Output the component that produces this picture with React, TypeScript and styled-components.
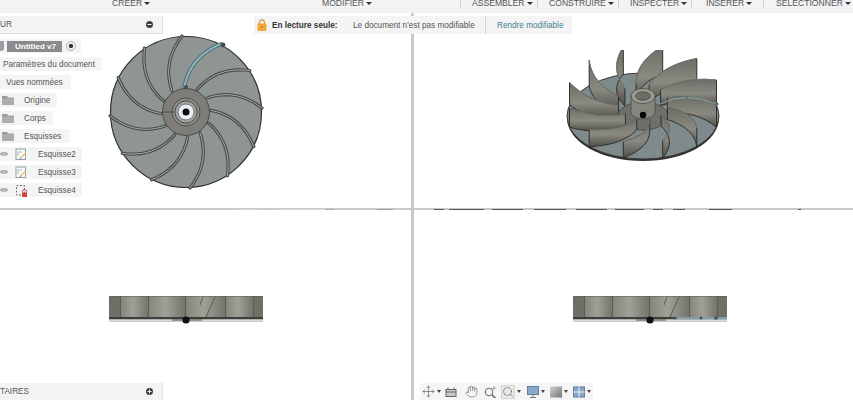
import React from 'react';
import styled, { createGlobalStyle } from 'styled-components';
import { Hand, Move, Search } from 'lucide-react';

const tools = [
  { label: 'CREER', width: 229, left: 112, line: false },
  { label: 'MODIFIER', width: 232, left: 93, line: true },
  { label: 'ASSEMBLER', width: 77, left: 11, line: true },
  { label: 'CONSTRUIRE', width: 81, left: 11, line: true },
  { label: 'INSPECTER', width: 73, left: 11, line: true },
  { label: 'INSERER', width: 72, left: 14, line: true },
  { label: 'SELECTIONNER', width: 89, left: 12, line: false },
];

const folders = ['Origine', 'Corps', 'Esquisses'];
const sketches = [
  { label: 'Esquisse2', locked: false },
  { label: 'Esquisse3', locked: false },
  { label: 'Esquisse4', locked: true },
];

// bits of the side views that show through the pane divider
const marks = [
  { left: 234, width: 26, color: '#dcd6c8' },
  { left: 274, width: 51, color: '#dcd6c8' },
  { left: 325, width: 9, color: '#aaaaaa' },
  { left: 377, width: 16, color: '#a0a0a0' },
  { left: 434, width: 10, color: '#555555' },
  { left: 449, width: 35, color: '#555555' },
  { left: 492, width: 31, color: '#555555' },
  { left: 534, width: 32, color: '#555555' },
  { left: 576, width: 31, color: '#555555' },
  { left: 615, width: 29, color: '#555555' },
  { left: 653, width: 10, color: '#555555' },
  { left: 673, width: 12, color: '#555555' },
  { left: 709, width: 23, color: '#555555' },
  { left: 798, width: 3, color: '#555555' },
];

const blade = (turn: number, cx: number, cy: number, squash: number) => {
  const a = (turn * Math.PI) / 180;
  const base: [number, number][] = [];
  for (let i = 0; i <= 12; i++) {
    const t = i / 12;
    const x = (1 - t) * (1 - t) * 21 + 2 * t * (1 - t) * 50 + t * t * 76;
    const y = (1 - t) * (1 - t) * -14 + 2 * t * (1 - t) * -24 + t * t * -4;
    base.push([
      cx + x * Math.cos(a) - y * Math.sin(a),
      cy + (x * Math.sin(a) + y * Math.cos(a)) * squash,
    ]);
  }
  const depth = base.reduce((sum, p) => sum + p[1], 0) / base.length;
  const lift = 22 - (depth - cy) * 0.2;
  const line = base.map((p) => `${p[0].toFixed(1)} ${p[1].toFixed(1)}`).join(' L');
  const top = base
    .map((p, i) => `${p[0].toFixed(1)} ${(p[1] - lift * (0.65 + (0.35 * i) / 12)).toFixed(1)}`)
    .reverse()
    .join(' L');
  return {
    curve: `M${line}`,
    wall: `M${line} L${top} Z`,
    edge: `M${top}`,
    depth,
  };
};

const turns = Array.from({ length: 12 }, (_, i) => i * 30);

const TopFan = () => (
  <svg width="156" height="156" viewBox="0 0 156 156">
    <circle cx="78" cy="78" r="75.5" fill="#8f9593" stroke="#2d2f2f" strokeWidth="1.2" />
    {turns.map((turn) => {
      const b = blade(turn, 78, 78, 1);
      const picked = turn === 300;
      return (
        <g key={turn} fill="none" strokeLinecap="round">
          <path d={b.curve} stroke={picked ? '#4f6f76' : '#474a4a'} strokeWidth={picked ? 4 : 3.2} />
          <path d={b.curve} stroke={picked ? '#8fb4bb' : '#a8adab'} strokeWidth={picked ? 2 : 1} />
        </g>
      );
    })}
    <circle cx="78" cy="78" r="23.5" fill="#7f7d78" stroke="#4a4a48" />
    <circle cx="78" cy="78" r="14" fill="#8d8c86" stroke="#55554f" />
    <circle cx="78" cy="78" r="11" fill="#a5a49d" stroke="#4f4f4a" />
    <circle cx="78" cy="78" r="8" fill="#e9f3f6" stroke="#6d7a80" />
    <circle cx="78" cy="78" r="3.5" fill="#0c0c0c" />
    <circle cx="115" cy="11" r="2.4" fill="#454a4a" />
    <circle cx="78" cy="53" r="2" fill="#454a4a" />
    <line x1="54" y1="78" x2="66" y2="78" stroke="#3d3d3b" strokeWidth="0.8" />
  </svg>
);

const IsoFan = () => {
  const walls = turns
    .map((turn) => ({ turn, ...blade(turn + 18, 83, 66, 0.57) }))
    .sort((a, b) => a.depth - b.depth);
  const back = walls.filter((w) => w.depth < 66);
  const front = walls.filter((w) => w.depth >= 66);
  const wall = (w: (typeof walls)[number]) => (
    <g key={w.turn} strokeLinejoin="round">
      <path d={w.wall} fill="url(#isoWall)" stroke="#2f302b" strokeWidth="1" />
      <path d={w.edge} fill="none" stroke="#a3a39b" strokeWidth="0.6" />
    </g>
  );
  return (
    <svg width="165" height="115" viewBox="0 0 165 115">
      <defs>
        <linearGradient id="isoWall" x1="0" y1="0" x2="0" y2="1">
          <stop offset="0" stopColor="#6d6d67" />
          <stop offset="0.55" stopColor="#8a8a82" />
          <stop offset="1" stopColor="#4f4f49" />
        </linearGradient>
      </defs>
      <ellipse cx="83" cy="68" rx="76" ry="43" fill="#2f302e" />
      <ellipse cx="83" cy="66" rx="76" ry="43" fill="#7f8a8c" stroke="#3a3b38" />
      {back.map(wall)}
      <ellipse cx="83" cy="66" rx="25" ry="14" fill="#6f6f69" stroke="#41423d" strokeWidth="0.8" />
      <path d="M71 46 L71 62 A12 7 0 0 0 95 62 L95 46 Z" fill="#85857d" stroke="#4b4b45" strokeWidth="0.8" />
      <ellipse cx="83" cy="46" rx="12" ry="7.5" fill="#9a9a92" stroke="#4b4b45" strokeWidth="0.8" />
      <ellipse cx="83" cy="46" rx="7.5" ry="4.2" fill="#6d6d66" stroke="#4b4b45" strokeWidth="0.8" />
      <circle cx="83" cy="65" r="3.2" fill="#050505" />
      {front.map(wall)}
      <path d="M100 54 Q125 41 157 54" fill="none" stroke="#8fb0b8" strokeWidth="0.9" />
      <circle cx="127" cy="47" r="1.3" fill="#55707a" />
      <circle cx="157" cy="54" r="1.6" fill="#5a6a6e" />
    </svg>
  );
};

const panels = [
  { x: 0, width: 11, dark: true },
  { x: 12, width: 27, dark: false },
  { x: 40, width: 36, dark: false },
  { x: 77, width: 39, dark: false },
  { x: 117, width: 27, dark: false },
  { x: 145, width: 9, dark: true },
];

const SideFan = ({ picked }: { picked?: boolean }) => (
  <svg width="154" height="30" viewBox="0 0 154 30">
    <defs>
      <linearGradient id="sidePanel" x1="0" y1="0" x2="1" y2="0">
        <stop offset="0" stopColor="#85857c" />
        <stop offset="0.45" stopColor="#a0a097" />
        <stop offset="1" stopColor="#74746c" />
      </linearGradient>
    </defs>
    <rect x="0" y="1" width="154" height="22" fill="#5c5c55" />
    {panels.map((panel) => (
      <rect
        key={panel.x}
        x={panel.x}
        y="1.5"
        width={panel.width}
        height="20.5"
        fill={panel.dark ? '#6f6f68' : 'url(#sidePanel)'}
      />
    ))}
    <path d="M94 2 L91 10 M106 2 L97 22" stroke="#4c4c46" strokeWidth="0.8" fill="none" />
    <rect x="0" y="22" width="154" height="2.4" fill="#3e3e3a" />
    <rect x="0" y="25.5" width="154" height="1.2" fill="#b4b4ae" />
    <rect x="63" y="24.5" width="30" height="1" fill="#55554f" />
    <circle cx="77" cy="25" r="3.6" fill="#111" />
    {picked && (
      <g>
        <rect x="101" y="22" width="53" height="2" fill="#7f9eaa" />
        <circle cx="102" cy="23" r="1.6" fill="#47555a" />
        <circle cx="128" cy="23" r="1.4" fill="#47555a" />
        <circle cx="143" cy="23" r="1.8" fill="#47555a" />
      </g>
    )}
  </svg>
);

const LockIcon = () => (
  <svg width="10" height="12" viewBox="0 0 10 12">
    <path d="M2.5 5V3.4a2.5 2.5 0 0 1 5 0V5" fill="none" stroke="#d9952f" strokeWidth="1.2" />
    <rect x="0.5" y="4.5" width="9" height="7.5" rx="1" fill="#f2a93b" />
    <rect x="4.4" y="7" width="1.2" height="2.4" fill="#c47f1c" />
  </svg>
);

const FolderIcon = () => (
  <svg width="12" height="9" viewBox="0 0 12 9">
    <path d="M0 0H5L6 1.5H12V9H0Z" fill="#9b9b9b" />
    <rect x="0" y="2.5" width="12" height="6.5" fill="#adadad" />
  </svg>
);

const EyeIcon = () => (
  <svg width="11" height="8" viewBox="0 0 11 8">
    <path d="M0 4C2 .4 9 .4 11 4C9 7.6 2 7.6 0 4Z" fill="#9a9a9a" />
    <circle cx="5.5" cy="4" r="2.2" fill="#f0f0f0" />
    <circle cx="5.5" cy="4" r="1.2" fill="#808080" />
  </svg>
);

const SketchIcon = ({ locked }: { locked: boolean }) => (
  <svg width="13" height="13" viewBox="0 0 13 13">
    {locked ? (
      <g>
        <rect x="1.5" y="1.5" width="8" height="9.5" fill="none" stroke="#777" strokeDasharray="2 1.5" />
        <path d="M7.5 8.5V7.5a2 2 0 0 1 4 0v1" fill="none" stroke="#c8433f" />
        <rect x="7" y="8.5" width="5" height="4.5" fill="#d6423c" />
      </g>
    ) : (
      <g>
        <rect x="1" y="1" width="9.5" height="10.5" fill="#f7fafb" stroke="#8aa2ad" />
        <path d="M3 4H7M3 4V8" stroke="#b5b5b5" fill="none" />
        <path d="M6 9.5L11 4.5" stroke="#eec25a" strokeWidth="1.5" />
        <path d="M5 11L6 9.5" stroke="#d8776d" strokeWidth="1.2" />
      </g>
    )}
  </svg>
);

const RoundButton = ({ plus }: { plus?: boolean }) => (
  <svg width="7" height="7" viewBox="0 0 7 7">
    <circle cx="3.5" cy="3.5" r="3.5" fill="#3e3e3e" />
    <rect x="1.5" y="3" width="4" height="1" fill="#f3f3f3" />
    {plus && <rect x="3" y="1.5" width="1" height="4" fill="#f3f3f3" />}
  </svg>
);

const Home = () => (
  <Page>
    <GlobalStyle />
    <Toolbar>
      {tools.map((tool) => (
        <Tool key={tool.label} $width={tool.width} $left={tool.left} $line={tool.line}>
          {tool.label}
          <Caret />
        </Tool>
      ))}
    </Toolbar>

    <Stage>
      <Viewport $top={21} $left={108}>
        <TopFan />
      </Viewport>
      <Viewport $top={37} $left={146}>
        <IsoFan />
      </Viewport>
      <Viewport $top={85} $left={109}>
        <SideFan />
      </Viewport>
      <Viewport $top={85} $left={159}>
        <SideFan picked />
      </Viewport>

      {marks.map((mark) => (
        <Mark key={mark.left} $left={mark.left} $width={mark.width} $color={mark.color} />
      ))}

      <Browser>
        <PanelHeader>
          UR
          <RoundButton />
        </PanelHeader>
        <Tree>
          <Row $width={81}>
            <Shield />
            <DocName>Untitled v7</DocName>
            <Radio />
          </Row>
          <Row $width={101} $indent={3}>Paramètres du document</Row>
          <Row $width={71} $indent={6}>Vues nommées</Row>
          {folders.map((name) => (
            <Row key={name} $width={name === 'Corps' ? 53 : name === 'Origine' ? 57 : 69} $indent={2} $gap={10}>
              <FolderIcon />
              {name}
            </Row>
          ))}
          {sketches.map((sketch) => (
            <Row key={sketch.label} $width={82} $gap={7}>
              <EyeSlot>
                <EyeIcon />
              </EyeSlot>
              <SketchIcon locked={sketch.locked} />
              <SketchName>{sketch.label}</SketchName>
            </Row>
          ))}
        </Tree>
      </Browser>

      <Banner>
        <LockIcon />
        <BannerTitle>En lecture seule:</BannerTitle>
        <BannerText>Le document n'est pas modifiable</BannerText>
        <BannerLink>Rendre modifiable</BannerLink>
      </Banner>

      <Comments>
        TAIRES
        <RoundButton plus />
      </Comments>

      <NavBar>
        <Move size={13} strokeWidth={1.3} />
        <NavCaret $gap={2} />
        <NavSlot $gap={4}>
          <svg width="12" height="12" viewBox="0 0 12 12">
            <rect x="1" y="3.5" width="10" height="7" fill="#c9c9c9" stroke="#666" />
            <path d="M3 3.5V1.5M9 3.5V1.5M1 6H11" stroke="#666" fill="none" />
          </svg>
        </NavSlot>
        <NavSlot $gap={8}>
          <Hand size={13} strokeWidth={1.2} />
        </NavSlot>
        <NavSlot $gap={6}>
          <svg width="12" height="12" viewBox="0 0 12 12">
            <circle cx="5" cy="6" r="3.8" fill="none" stroke="#666" />
            <path d="M8 9L11.5 12" stroke="#555" strokeWidth="1.4" />
            <path d="M10 0.5V4M8.3 2.2H11.7" stroke="#888" strokeWidth="0.8" />
          </svg>
        </NavSlot>
        <NavBox $gap={6}>
          <Search size={12} strokeWidth={1.3} />
        </NavBox>
        <NavCaret $gap={3} />
        <NavSlot $gap={6}>
          <svg width="12" height="12" viewBox="0 0 12 12">
            <rect x="0.5" y="0.5" width="11" height="8" fill="#8ba7c9" stroke="#5f7f9f" />
            <path d="M6 9V11M3 11.5H9" stroke="#777" fill="none" />
          </svg>
        </NavSlot>
        <NavCaret $gap={2} />
        <NavSlot $gap={5}>
          <svg width="12" height="12" viewBox="0 0 12 12">
            <defs>
              <linearGradient id="navShade" x1="0" y1="0" x2="1" y2="1">
                <stop offset="0" stopColor="#d0d0d0" />
                <stop offset="1" stopColor="#777" />
              </linearGradient>
            </defs>
            <rect x="0" y="0.5" width="12" height="11" fill="url(#navShade)" />
          </svg>
        </NavSlot>
        <NavCaret $gap={2} />
        <NavSlot $gap={5}>
          <svg width="12" height="12" viewBox="0 0 12 12">
            <rect x="0.5" y="1" width="11" height="10" fill="#8aa5c8" stroke="#5b7ca3" />
            <path d="M6 1V11M0.5 6H11.5" stroke="#eef3f8" />
          </svg>
        </NavSlot>
        <NavCaret $gap={2} />
      </NavBar>
    </Stage>
  </Page>
);

const GlobalStyle = createGlobalStyle`
  html, body {
    margin: 0;
    background: #fff;
    overflow: hidden;
  }
`;

const Page = styled.div`
  width: 853px;
  height: 400px;
  display: flex;
  flex-direction: column;
  overflow: hidden;
  font-family: 'Liberation Sans', Arial, sans-serif;
  color: #555;
`;

const Toolbar = styled.div`
  height: 13px;
  flex: none;
  display: flex;
  background: #f3f3f3;
  overflow: hidden;
`;

const Tool = styled.div<{ $width: number; $left: number; $line: boolean }>`
  width: ${(p) => p.$width}px;
  height: 8px;
  box-sizing: border-box;
  flex: none;
  display: flex;
  align-items: center;
  padding: 0 0 2px ${(p) => p.$left}px;
  font-size: 8.6px;
  line-height: 6px;
  white-space: nowrap;
  border-right: ${(p) => (p.$line ? '1px solid #cfcfcf' : '0')};
`;

const Caret = styled.span`
  margin-left: 2px;
  border-left: 3px solid transparent;
  border-right: 3px solid transparent;
  border-top: 3.5px solid #333;
`;

const Stage = styled.div`
  position: relative;
  flex: 1;
  display: grid;
  grid-template-columns: 411px 1fr;
  grid-template-rows: 195px 1fr;
  gap: 2px 3px;
  background: #c9c9c9;
`;

const Viewport = styled.div<{ $top: number; $left: number }>`
  background: #fff;
  padding: ${(p) => p.$top}px 0 0 ${(p) => p.$left}px;
  overflow: hidden;

  svg {
    display: block;
  }
`;

const Mark = styled.span<{ $left: number; $width: number; $color: string }>`
  position: absolute;
  left: ${(p) => p.$left}px;
  top: 196px;
  width: ${(p) => p.$width}px;
  height: 1px;
  background: ${(p) => p.$color};
`;

const Browser = styled.div`
  position: absolute;
  left: 0;
  top: 3px;
  width: 163px;
`;

const PanelHeader = styled.div`
  height: 18px;
  display: flex;
  align-items: center;
  justify-content: space-between;
  padding-right: 9px;
  box-sizing: border-box;
  background: #f3f3f3;
  border-right: 1px solid #ddd;
  border-bottom: 1px solid #ddd;
  font-size: 8.2px;
`;

const Tree = styled.div`
  margin-top: 5px;
  display: flex;
  flex-direction: column;
  gap: 4px;
`;

const Row = styled.div<{ $width: number; $indent?: number; $gap?: number }>`
  width: ${(p) => p.$width}px;
  height: 14px;
  box-sizing: border-box;
  padding-left: ${(p) => p.$indent ?? 0}px;
  display: flex;
  align-items: center;
  gap: ${(p) => p.$gap ?? 0}px;
  background: #f4f4f4;
  font-size: 8.2px;
  white-space: nowrap;
`;

const Shield = styled.span`
  width: 4px;
  height: 10px;
  margin-right: 3px;
  background: #9a9ea3;
  border-radius: 0 0 3px 0;
`;

const DocName = styled.span`
  width: 55px;
  height: 11px;
  box-sizing: border-box;
  padding-left: 8px;
  background: #8b8b8b;
  color: #fff;
  font-size: 8px;
  font-weight: 700;
  line-height: 11px;
`;

const Radio = styled.span`
  width: 10px;
  height: 10px;
  margin-left: 4px;
  box-sizing: border-box;
  border: 1px solid #b5b5b5;
  border-radius: 50%;
  background: radial-gradient(circle, #333 0 1.8px, #eee 2.4px);
`;

const EyeSlot = styled.span`
  width: 8px;
  display: flex;
  justify-content: flex-end;
  overflow: hidden;
`;

const SketchName = styled.span`
  margin-left: 3px;
`;

const Banner = styled.div`
  position: absolute;
  left: 254px;
  top: 3px;
  width: 318px;
  height: 18px;
  box-sizing: border-box;
  padding-left: 3px;
  display: flex;
  align-items: center;
  background: #f4f4f4;
  font-size: 8.2px;
  white-space: nowrap;
`;

const BannerTitle = styled.b`
  margin-left: 5px;
  width: 81px;
  color: #333;
`;

const BannerText = styled.span`
  width: 133px;
  height: 100%;
  display: flex;
  align-items: center;
  box-sizing: border-box;
  border-right: 1px solid #d5d5d5;
`;

const BannerLink = styled.span`
  margin-left: 11px;
  color: #3f7f92;
`;

const Comments = styled.div`
  position: absolute;
  left: 0;
  bottom: 0;
  width: 163px;
  height: 17px;
  box-sizing: border-box;
  padding-right: 9px;
  display: flex;
  align-items: center;
  justify-content: space-between;
  background: #f3f3f3;
  border-right: 1px solid #e2e2e2;
  font-size: 8.2px;
`;

const NavBar = styled.div`
  position: absolute;
  left: 420px;
  bottom: 0;
  width: 173px;
  height: 17px;
  box-sizing: border-box;
  padding-left: 2px;
  display: flex;
  align-items: center;
  background: #f5f5f5;
  color: #666;
`;

const NavSlot = styled.span<{ $gap: number }>`
  margin-left: ${(p) => p.$gap}px;
  display: flex;
`;

const NavBox = styled(NavSlot)`
  background: #e8e8e8;
  outline: 1px solid #d5d5d5;
`;

const NavCaret = styled.span<{ $gap: number }>`
  margin-left: ${(p) => p.$gap}px;
  border-left: 2.5px solid transparent;
  border-right: 2.5px solid transparent;
  border-top: 3px solid #444;
`;

export default Home;
